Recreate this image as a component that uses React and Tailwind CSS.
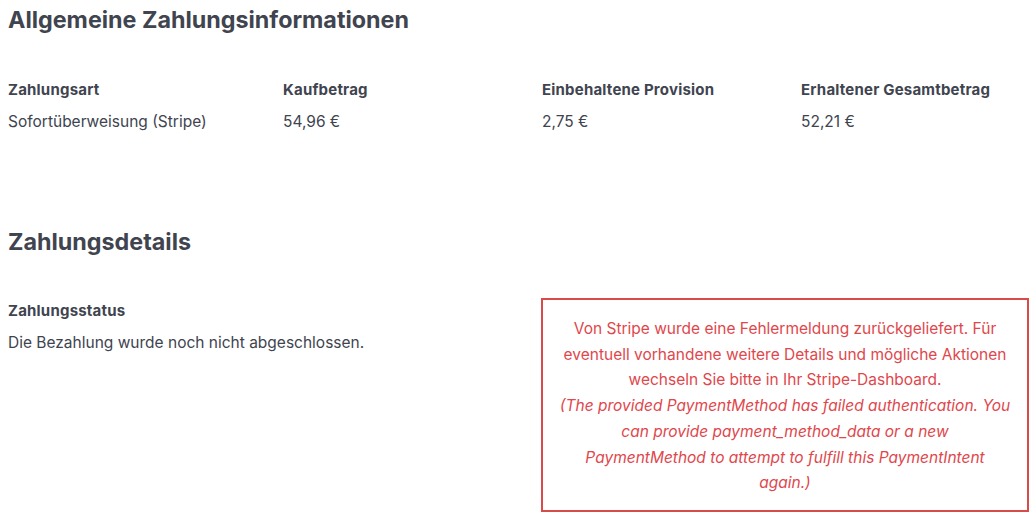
const FONT = { fontFamily: "Inter, 'Noto Sans', sans-serif" };

const rows = [
  { label: "Zahlungsart", value: "Sofortüberweisung (Stripe)" },
  { label: "Kaufbetrag", value: "54,96 €" },
  { label: "Einbehaltene Provision", value: "2,75 €" },
  { label: "Erhaltener Gesamtbetrag", value: "52,21 €" },
];

export default function App() {
  return (
    <div className="min-h-screen bg-white px-2 text-[#40444f]" style={FONT}>
      <h2 className="pt-[5px] text-[23.3px] font-bold leading-[30px]">
        Allgemeine Zahlungsinformationen
      </h2>

      <div className="mt-[45px] grid grid-cols-[275px_259px_259px_1fr]">
        {rows.map((r) => (
          <div key={r.label}>
            <div className="text-[15px] font-bold leading-[20px] tracking-[0.2px]">{r.label}</div>
            <div className="mt-[12px] text-[15.5px] leading-[20px]">{r.value}</div>
          </div>
        ))}
      </div>

      <h2 className="mt-[95px] text-[23.3px] font-bold leading-[30px]">
        Zahlungsdetails
      </h2>

      <div className="mt-[41px] grid grid-cols-[533px_488px]">
        <div className="pt-[3px]">
          <div className="text-[15px] font-bold leading-[20px] tracking-[0.2px]">Zahlungsstatus</div>
          <div className="mt-[12px] text-[15.5px] leading-[20px]">
            Die Bezahlung wurde noch nicht abgeschlossen.
          </div>
        </div>
        <div className="border-2 border-[#d94a4a] px-2 pt-[16px] pb-[14px] text-center text-[15.5px] leading-[25.7px] text-[#e0474c]">
          <p>
            Von Stripe wurde eine Fehlermeldung zurückgeliefert. Für
            <br />
            eventuell vorhandene weitere Details und mögliche Aktionen
            <br />
            wechseln Sie bitte in Ihr Stripe-Dashboard.
          </p>
          <p className="italic">
            (The provided PaymentMethod has failed authentication. You
            <br />
            can provide payment_method_data or a new
            <br />
            PaymentMethod to attempt to fulfill this PaymentIntent
            <br />
            again.)
          </p>
        </div>
      </div>
    </div>
  );
}
